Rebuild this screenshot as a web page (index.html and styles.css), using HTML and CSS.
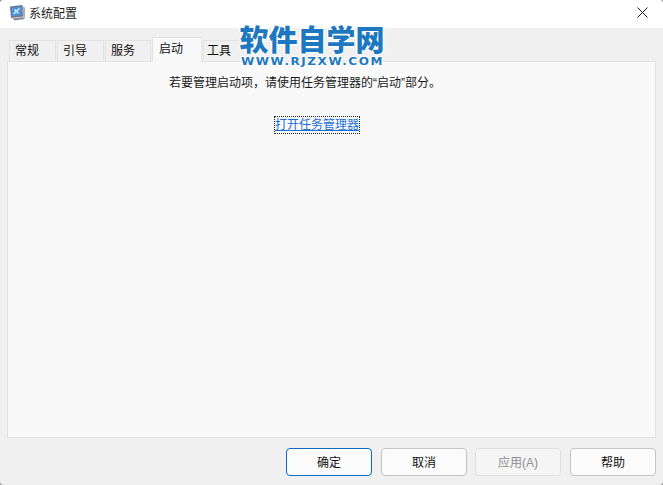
FILE: index.html
```html
<!DOCTYPE html>
<html lang="zh-CN">
<head>
<meta charset="utf-8">
<title>系统配置</title>
<link rel="stylesheet" href="styles.css">
</head>
<body>
<div class="window">
  <header class="titlebar">
    <svg class="app-icon" width="18" height="18" viewBox="0 0 18 18">
      <path d="M1 2.5 L13.5 1 L14 12.5 L2 14 Z" fill="#6b7688"/>
      <path d="M2.5 3.8 L12.3 2.6 L12.7 11 L3 12.3 Z" fill="#4a94dc"/>
      <path d="M4.5 10 L10.5 4.5 M5.5 5.5 L9.5 9.5" stroke="#dcecf9" stroke-width="1.3" fill="none"/>
      <path d="M13.5 2 L16 3.5 L16 14 L14 12.5 Z" fill="#a9adb5"/>
      <path d="M3 14.5 L14 13 L16 15 L6 16.5 Z" fill="#8b8f98"/>
    </svg>
    <span class="title">系统配置</span>
    <svg class="close" width="11" height="11" viewBox="0 0 11 11">
      <path d="M0.5 0.5 L10.5 10.5 M10.5 0.5 L0.5 10.5" stroke="#1a1a1a" stroke-width="1" fill="none"/>
    </svg>
  </header>
  <main class="content">
    <nav class="tabs">
      <div class="tab t1">常规</div>
      <div class="tab t2">引导</div>
      <div class="tab t3">服务</div>
      <div class="tab active">启动</div>
      <div class="tab t5">工具</div>
    </nav>
    <section class="panel">
      <p class="msg">若要管理启动项，请使用任务管理器的“启动”部分。</p>
      <a class="link" href="#">打开任务管理器</a>
    </section>
    <footer class="actions">
      <button class="btn primary">确定</button>
      <button class="btn">取消</button>
      <button class="btn disabled">应用(A)</button>
      <button class="btn">帮助</button>
    </footer>
  </main>
  <div class="watermark">
    <div class="wm-cn">软件自学网</div>
    <div class="wm-en">WWW.RJZXW.COM</div>
  </div>
</div>
</body>
</html>
```
FILE: styles.css
```css
* { box-sizing: border-box; }
html, body { margin: 0; padding: 0; }
body {
  width: 663px;
  height: 485px;
  overflow: hidden;
  background: #9a9a9a;
  font-family: "Liberation Sans", "Noto Sans CJK SC", sans-serif;
  font-size: 12px;
  color: #111;
}
.window {
  position: relative;
  width: 663px;
  height: 485px;
  background: #f0f0f0;
  border-radius: 4px;
  overflow: hidden;
  display: flex;
  flex-direction: column;
}
.titlebar {
  height: 28px;
  flex: none;
  background: #fff;
  display: flex;
  align-items: center;
  padding: 0 15px 3px 9px;
}
.app-icon { margin-right: 2px; }
.title { font-size: 12px; color: #222; flex: 1; }
.close { display: block; }
.content {
  flex: 1;
  display: flex;
  flex-direction: column;
  padding: 10px 7px 9px 7px;
}
.tabs {
  height: 24px;
  display: flex;
  align-items: flex-end;
  padding-left: 2px;
  position: relative;
  z-index: 1;
  margin-bottom: -1px;
}
.tab {
  height: 22px;
  background: #f0f0f0;
  border: 1px solid #e2e2e2;
  margin-right: 1px;
  font-size: 12px;
  line-height: 20px;
  padding-left: 5px;
  color: #111;
}
.t1 { width: 47px; }
.t2 { width: 47px; }
.t3 { width: 46px; }
.t5 { width: 48px; padding-left: 3px; }
.tab.active {
  width: 50px;
  height: 25px;
  background: #f9f9f9;
  border-bottom-color: #f9f9f9;
  line-height: 22px;
  padding-left: 6px;
}
.panel {
  height: 377px;
  background: #f9f9f9;
  border: 1px solid #e2e2e2;
  display: flex;
  flex-direction: column;
  align-items: flex-start;
  padding-top: 11px;
}
.msg {
  margin: 0 0 0 161px;
  font-size: 12px;
  line-height: 20px;
  color: #1a1a1a;
}
.link {
  margin: 24px 0 0 267px;
  font-size: 12px;
  line-height: 16px;
  color: #1a6fd6;
  text-decoration: underline;
  outline: 1px dotted #222;
}
.actions {
  display: flex;
  justify-content: flex-end;
  gap: 9px;
  margin-top: 10px;
}
.btn {
  width: 86px;
  height: 28px;
  padding: 0 0 2px;
  background: #fbfbfb;
  border: 1px solid #c4c4c4;
  border-radius: 4px;
  font-family: inherit;
  font-size: 12px;
  color: #111;
}
.btn.primary { border-color: #0a6cc4; }
.btn.disabled {
  margin-left: -1px;
  background: #f5f5f5;
  border-color: #dfdfdf;
  color: #8f8f8f;
}
.watermark {
  position: absolute;
  z-index: 2;
  left: 239px;
  top: 23px;
  width: 146px;
  color: #1e78bf;
  font-family: "Noto Sans CJK SC", sans-serif;
}
.wm-cn {
  font-size: 29px;
  font-weight: 900;
  line-height: 30px;
  text-align: center;
  white-space: nowrap;
  text-shadow: 1px 0 1px #fff, -1px 0 1px #fff, 0 1px 1px #fff, 0 -1px 1px #fff, 0 0 3px #fff, 0 0 3px #fff;
}
.wm-en {
  margin: 3px 0 0 2px;
  font-family: "DejaVu Sans", sans-serif;
  font-size: 10px;
  font-weight: 700;
  line-height: 11px;
  letter-spacing: 1.3px;
  white-space: nowrap;
  transform: scaleX(1.2);
  transform-origin: left center;
  text-shadow: 1px 0 1px #fff, -1px 0 1px #fff, 0 1px 1px #fff, 0 -1px 1px #fff, 0 0 3px #fff;
}
```
